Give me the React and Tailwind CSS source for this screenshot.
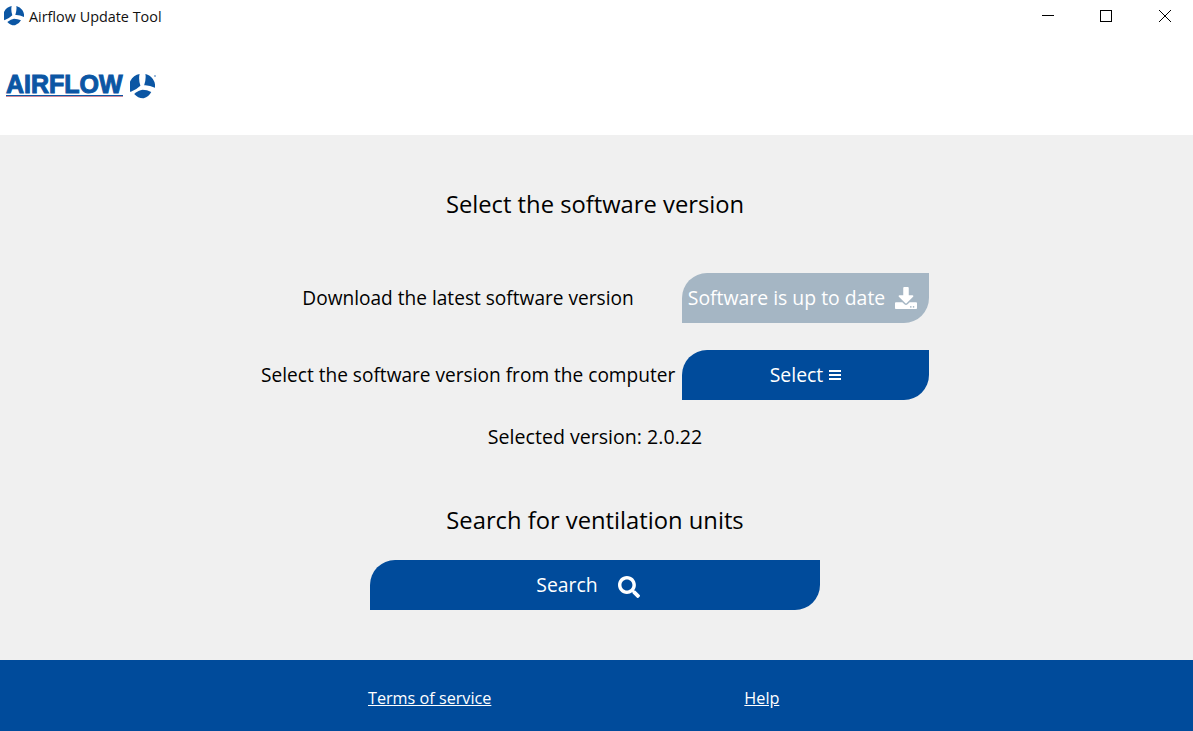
import { FaDownload, FaSearch } from "react-icons/fa";

function Fan({ className }) {
  // three curved blades inside a ring
  return (
    <svg viewBox="0 0 60 60" className={className} fill="currentColor">
      <path d="M23 0 A30 30 0 0 0 1 43 Q16 37 25 28 Q20 13 23 0 Z" />
      <path d="M37 0 A30 30 0 0 1 60 33 Q46 26 34 27 Q39 12 37 0 Z" />
      <path d="M10 48 Q21 39 30 38 Q41 38 51 43 A30 30 0 0 1 33 58 Q20 59 10 48 Z" />
    </svg>
  );
}

function Logo() {
  return (
    <div className="flex items-start gap-[7px] text-[#0b56a4]">
      <div className="flex flex-col">
        <span className="font-['Liberation_Sans',sans-serif] text-[25px] font-bold leading-[20px] [-webkit-text-stroke:1px_#0b56a4]">
          AIRFLOW
        </span>
        <div className="mt-[1px] h-[1px] w-[117px] bg-[#0b56a4]" />
        <div className="h-[1px] w-[117px] bg-[#d08a9a]" />
      </div>
      <div className="relative">
        <Fan className="h-[25px] w-[25px]" />
        <span className="absolute -right-[1px] top-[1px] h-[2px] w-[2px] rounded-full bg-[#7fa6cf]" />
      </div>
    </div>
  );
}

function Row({ label, children }) {
  return (
    <div className="flex h-[50px] items-center">
      <div className="w-[421px] whitespace-nowrap pr-[7px] text-center text-[19.1px] text-black">{label}</div>
      {children}
    </div>
  );
}

export default function App() {
  return (
    <div className="flex h-[731px] w-[1193px] flex-col overflow-hidden bg-white font-['Open_Sans','Noto_Sans',sans-serif]">
      {/* window title bar */}
      <div className="flex h-[33px] justify-between">
        <div className="flex items-center gap-[5px] pl-[4px]">
          <Fan className="-mt-[1px] h-[20px] w-[20px] text-[#0b56a4]" />
          <span className="text-[14.4px] text-[#111]">Airflow Update Tool</span>
        </div>
        <div className="flex items-start pt-[9px]">
          <svg width="14" height="14" viewBox="0 0 14 14" className="mr-[44px]" stroke="#000" fill="none">
            <path d="M1 6.5 H13" />
          </svg>
          <svg width="14" height="14" viewBox="0 0 14 14" className="mr-[45px]" stroke="#000" fill="none">
            <rect x="1.5" y="1.5" width="11" height="11" />
          </svg>
          <svg width="14" height="14" viewBox="0 0 14 14" className="mr-[21px]" stroke="#000" fill="none">
            <path d="M1 1 L13 13 M13 1 L1 13" />
          </svg>
        </div>
      </div>

      <div className="flex h-[102px] items-start pl-[6px] pt-[41px]">
        <Logo />
      </div>

      <main className="flex flex-1 flex-col items-center bg-[#f0f0f0] pr-[3px] pt-[49px]">
        <h1 className="text-[23.75px] leading-[40px] text-black">Select the software version</h1>

        <div className="mt-[49px] flex flex-col gap-[27px]">
          <Row label="Download the latest software version">
            <button className="flex h-[50px] w-[247px] items-center justify-center gap-[10px] rounded-tl-[25px] rounded-br-[25px] bg-[#a5b6c4] pr-[6px] text-[19.4px] text-white">
              Software is up to date
              <FaDownload size={22} />
            </button>
          </Row>
          <Row label="Select the software version from the computer">
            <button className="flex h-[50px] w-[247px] items-center justify-center gap-[6px] rounded-tl-[25px] rounded-br-[25px] bg-[#004b9b] text-[19.4px] text-white">
              Select
              <span className="flex flex-col gap-[2px]">
                <span className="h-[2px] w-[12px] bg-white" />
                <span className="h-[2px] w-[12px] bg-white" />
                <span className="h-[2px] w-[12px] bg-white" />
              </span>
            </button>
          </Row>
        </div>

        <p className="mt-[20px] text-[19.6px] leading-[34px] text-black">Selected version: 2.0.22</p>

        <h2 className="mt-[46px] text-[23.75px] leading-[40px] text-black">Search for ventilation units</h2>

        <button className="mt-[20px] flex h-[50px] w-[450px] items-center justify-center gap-[20px] rounded-tl-[25px] rounded-br-[25px] bg-[#004b9b] pr-[14px] text-[19.4px] text-white">
          Search
          <FaSearch size={22} className="mt-[4px]" />
        </button>
      </main>

      <footer className="flex h-[71px] items-center bg-[#004b9b] pl-[368px] pt-[6px] text-[16.2px] text-white">
        <a href="#" className="underline">Terms of service</a>
        <a href="#" className="ml-[253px] underline">Help</a>
      </footer>
    </div>
  );
}
